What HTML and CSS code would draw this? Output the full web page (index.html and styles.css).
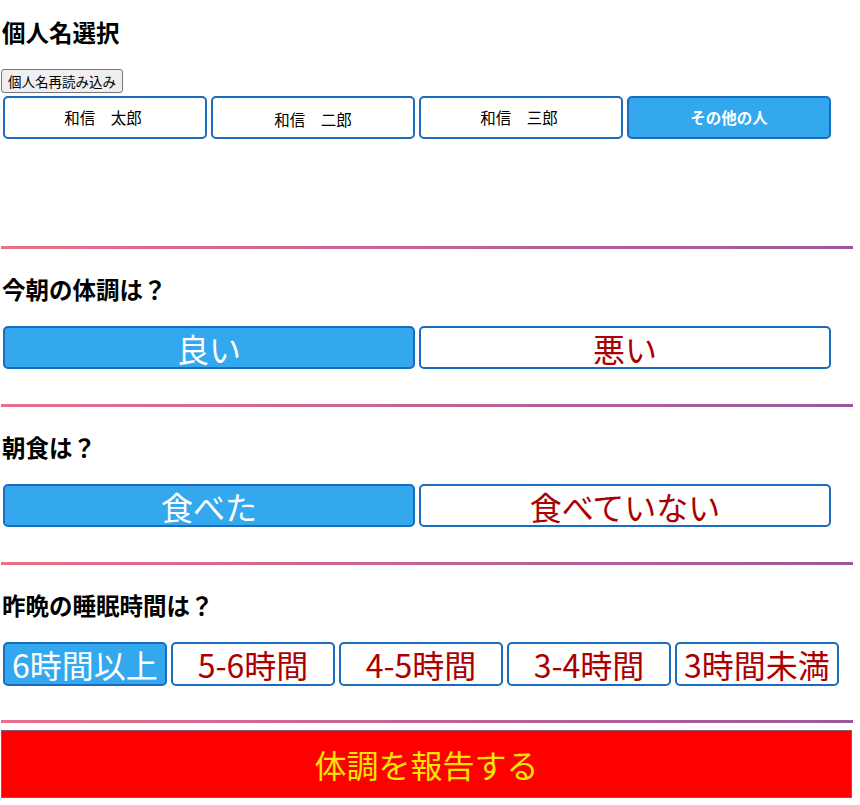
FILE: index.html
```html
<!DOCTYPE html>
<html lang="ja">
<head>
<meta charset="utf-8">
<title>体調報告</title>
<link rel="stylesheet" href="styles.css">
</head>
<body>
<div class="page">
  <section class="person">
    <h2 class="title first">個人名選択</h2>
    <button class="reload">個人名再読み込み</button>
    <div class="choices names">
      <button class="opt name">和信　太郎</button>
      <button class="opt name low">和信　二郎</button>
      <button class="opt name">和信　三郎</button>
      <button class="opt name on bold">その他の人</button>
    </div>
  </section>

  <div class="rule"></div>
  <section class="q">
    <h2 class="title">今朝の体調は？</h2>
    <div class="choices">
      <button class="opt big half on">良い</button>
      <button class="opt big half">悪い</button>
    </div>
  </section>

  <div class="rule"></div>
  <section class="q">
    <h2 class="title">朝食は？</h2>
    <div class="choices">
      <button class="opt big half on">食べた</button>
      <button class="opt big half">食べていない</button>
    </div>
  </section>

  <div class="rule"></div>
  <section class="q">
    <h2 class="title">昨晩の睡眠時間は？</h2>
    <div class="choices">
      <button class="opt big fifth on">6時間以上</button>
      <button class="opt big fifth">5-6時間</button>
      <button class="opt big fifth">4-5時間</button>
      <button class="opt big fifth">3-4時間</button>
      <button class="opt big fifth">3時間未満</button>
    </div>
  </section>

  <div class="rule last"></div>
  <button class="report">体調を報告する</button>
</div>
</body>
</html>
```

FILE: styles.css
```css
html, body {
  margin: 0;
  padding: 0;
  background: #ffffff;
}

body {
  font-family: "Noto Sans CJK JP", "Noto Sans", sans-serif;
  color: #000;
}

.page {
  width: 860px;
}

.title {
  margin: 24px 0 21px 2px;
  font-size: 23.5px;
  font-weight: 700;
  line-height: 32px;
  height: 32px;
}

.title.first {
  margin-top: 16px;
  margin-bottom: 21px;
}

.reload {
  display: block;
  margin: 0 0 3px 1px;
  height: 24px;
  padding: 0 6px;
  font-family: "Noto Sans CJK JP", sans-serif;
  font-size: 13.5px;
  line-height: 20px;
  color: #000;
  background: #efefef;
  border: 1px solid #767676;
  border-radius: 3px;
}

.person {
  height: 246px;
  overflow: hidden;
}

.choices {
  display: flex;
  gap: 4px;
  margin-left: 3px;
}

.opt {
  box-sizing: border-box;
  display: flex;
  align-items: center;
  justify-content: center;
  padding: 0;
  margin: 0;
  background: #ffffff;
  border: 2px solid #1a6cbf;
  border-radius: 5px;
  font-family: "Noto Sans CJK JP", sans-serif;
  line-height: 1;
  white-space: nowrap;
}

.name {
  width: 204px;
  height: 43px;
  font-size: 15.5px;
  color: #000;
  padding-right: 4px;
}

.name.low {
  padding-top: 4px;
  padding-right: 0;
}

.bold {
  font-weight: 700;
  padding-right: 0;
}

.big {
  font-size: 32px;
  color: #aa0000;
  height: 43px;
}

.half {
  width: 412px;
}

.fifth {
  width: 164px;
  height: 44px;
}

.opt.on {
  background: #33a8ee;
  color: #ffffff;
}

.q {
  height: 155px;
  overflow: hidden;
}

.rule {
  width: 852px;
  height: 3px;
  margin-left: 1px;
  background: linear-gradient(to right, #e96f8a, #9a58a0);
}

.rule.last {
  margin-bottom: 7px;
}

.report {
  display: flex;
  align-items: center;
  justify-content: center;
  box-sizing: border-box;
  width: 851px;
  height: 68px;
  margin: 0 0 0 1px;
  padding: 0;
  background: #ff0000;
  border: 1px solid #86587a;
  color: #f8e400;
  font-family: "Noto Sans CJK JP", sans-serif;
  font-size: 32px;
  line-height: 1;
}
```
